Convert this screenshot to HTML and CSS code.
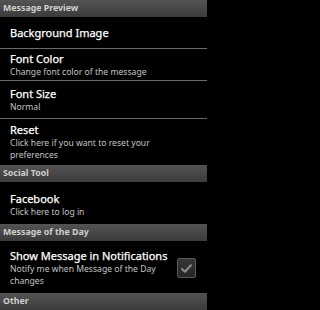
FILE: index.html
```html
<!DOCTYPE html>
<html>
<head>
<meta charset="utf-8">
<link rel="stylesheet" href="styles.css">
</head>
<body>
<div class="screen">
  <div class="cat">Message Preview</div>
  <div class="pref single h32 div">
    <div class="title">Background Image</div>
  </div>
  <div class="pref h32 div">
    <div class="title">Font Color</div>
    <div class="sum">Change font color of the message</div>
  </div>
  <div class="pref h38 div">
    <div class="title">Font Size</div>
    <div class="sum">Normal</div>
  </div>
  <div class="pref h46">
    <div class="title">Reset</div>
    <div class="sum">Click here if you want to reset your preferences</div>
  </div>
  <div class="cat">Social Tool</div>
  <div class="pref h42 low">
    <div class="title">Facebook</div>
    <div class="sum">Click here to log in</div>
  </div>
  <div class="cat">Message of the Day</div>
  <div class="pref h52 row">
    <div class="texts">
      <div class="title">Show Message in Notifications</div>
      <div class="sum">Notify me when Message of the Day changes</div>
    </div>
    <div class="check">
      <svg viewBox="0 0 16 16" width="13" height="13">
        <path d="M2.5 8.5 L6 12 L13.5 4" fill="none" stroke="#8c8c8c" stroke-width="2.6" stroke-linecap="round" stroke-linejoin="round"/>
      </svg>
    </div>
  </div>
  <div class="cat">Other</div>
</div>
</body>
</html>
```

FILE: styles.css
```css
html, body {
  margin: 0;
  padding: 0;
  background: #000;
}
.screen {
  width: 207px;
  height: 310px;
  overflow: hidden;
  background: #000;
  font-family: "Noto Sans", "Open Sans", "DejaVu Sans", sans-serif;
}
.cat {
  height: 17px;
  line-height: 17px;
  padding-left: 3px;
  font-size: 8.8px;
  font-weight: bold;
  color: #cfcfcf;
  background: linear-gradient(#535353, #3b3b3b);
  white-space: nowrap;
}
.pref {
  box-sizing: border-box;
  display: flex;
  flex-direction: column;
  justify-content: center;
  padding-left: 10px;
  padding-right: 8px;
}
.pref.div {
  border-bottom: 1px solid #6a6a6a;
}
.pref.low {
  padding-top: 3px;
}
.h32 { height: 32px; }
.h38 { height: 38px; }
.h42 { height: 42px; }
.h46 { height: 46px; }
.h52 { height: 52px; padding-top: 2px; }
.title {
  font-size: 11px;
  line-height: 14px;
  color: #fff;
  white-space: nowrap;
  -webkit-text-stroke: 0.25px #fff;
}
.sum {
  font-size: 8.6px;
  line-height: 12px;
  color: #c4c4c4;
}
.pref.row {
  flex-direction: row;
  align-items: center;
  justify-content: space-between;
  padding-right: 11px;
}
.texts {
  display: flex;
  flex-direction: column;
}
.check {
  flex: none;
  width: 19px;
  height: 20px;
  box-sizing: border-box;
  border: 1px solid #5a5a5a;
  border-radius: 2px;
  background: linear-gradient(#363636, #262626);
  display: flex;
  align-items: center;
  justify-content: center;
}
```
